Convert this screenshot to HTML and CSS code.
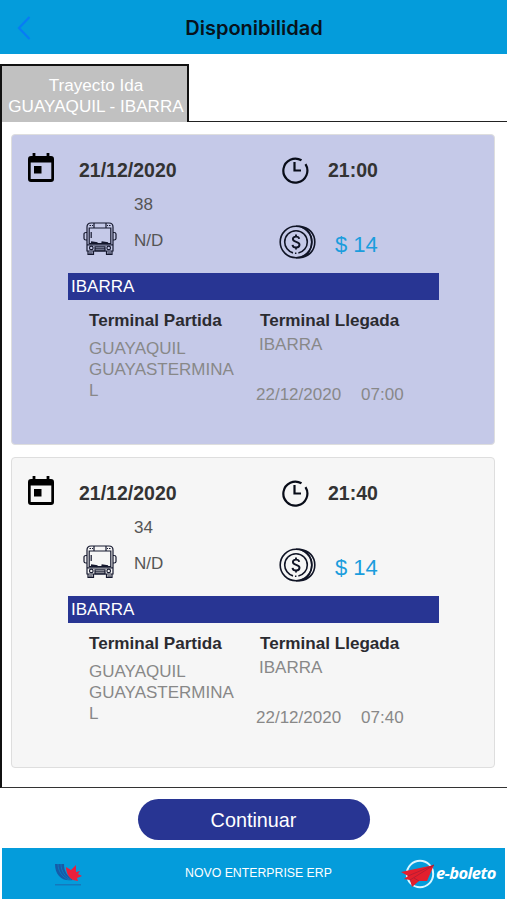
FILE: index.html
```html
<!DOCTYPE html>
<html lang="es">
<head>
    <meta charset="UTF-8">
    <meta name="viewport" content="width=device-width, initial-scale=1.0">
    <title>Disponibilidad</title>
    <link rel="stylesheet" href="styles.css">
</head>
<body>

    <!-- Shared icons -->
    <svg class="sprite" width="0" height="0">
        <symbol id="calendar" viewBox="0 0 26 29">
            <path fill-rule="evenodd" d="M4.600 0h2.800v3h11.200V0h2.800v3H23a3 3 0 0 1 3 3v20a3 3 0 0 1-3 3H3a3 3 0 0 1-3-3V6a3 3 0 0 1 3-3h1.600zM2.700 9.500v16.500h20.600V9.500z"/>
            <path d="M6 13h7.500v7.500H6z"/>
        </symbol>
        <symbol id="clock" viewBox="0 0 28 28">
            <path d="M20.500 4.300A12 12 0 1 0 24.500 8.200M13.500 6v8.500h6.500" fill="none" stroke="#080c18" stroke-width="2.200"/>
        </symbol>
        <symbol id="bus" viewBox="0 0 34 34">
            <g fill="none" stroke="#15182e" stroke-width="1.200">
                <path d="M4 29V5q0-4 4-4h18q4 0 4 4v24zM11 1v5M23 1v5M6.200 6h21.600v15.500H6.200zM4 22.800h26"/>
                <path d="M4 10.500H3q-2 0-2 1.500v4.500q0 1.500 2 1.500h1M30 10.500h1q2 0 2 1.500v4.500q0 1.500-2 1.500h-1M8.200 10v6"/>
                <path d="M5 29v3.300h5.500V29M23.500 29v3.300H29V29M12 24.800h10v4H12zM12 26.800h10"/>
                <circle cx="8.300" cy="25.900" r="1.800"/>
                <circle cx="25.700" cy="25.900" r="1.800"/>
                <path d="M8 20.200l6.500 1M18.500 20.200l6.500 1" stroke-width="2"/>
                <path d="M6.500 3.500h1.500M9 3.500h1M24 3.500h1M26 3.500h1.500M6 31h3.500M24.500 31H28"/>
            </g>
        </symbol>
        <symbol id="coin" viewBox="0 0 37 34">
            <g fill="none" stroke="#101425" stroke-width="1.600">
                <circle cx="17" cy="17" r="15.800"/>
                <circle cx="17" cy="17" r="11.300" stroke-dasharray="15.200 2 1.500 2 100"/>
                <path d="M17 1.200h4c9 1 14.800 7.500 14.800 15.800S30 31.800 21 32.800h-4M22 1.800c7 2 10.800 8 10.800 15.200S29 30.200 22 32.200"/>
                <path d="M20.200 13.800c-.5-3-6.300-3-6.300.3 0 3.500 6.600 2 6.600 5.600 0 3.700-6.500 3.700-7 .1M17 9.500v2.500M17 22v2.500" stroke-width="1.900"/>
            </g>
        </symbol>
    </svg>

    <header>
        <svg class="back" viewBox="0 0 14 24"><path d="M12.500 1L2 12l10.500 11"/></svg>
        <h1>Disponibilidad</h1>
    </header>

    <main>
        <div class="tabs">
            <div class="tab">Trayecto Ida<br>GUAYAQUIL - IBARRA</div>
            <div class="tab-line"></div>
        </div>

        <!-- Trips -->
        <div class="trips">
            <section class="card selected">
                <div class="departure">
                    <svg class="calendar"><use href="#calendar"/></svg>
                    <strong class="date">21/12/2020</strong>
                    <svg class="clock"><use href="#clock"/></svg>
                    <strong>21:00</strong>
                </div>
                <div class="details">
                    <svg class="bus"><use href="#bus"/></svg>
                    <div class="seats">38<br>N/D</div>
                    <svg class="coin"><use href="#coin"/></svg>
                    <span class="price">$ 14</span>
                </div>
                <div class="route">IBARRA</div>
                <div class="terminals">
                    <div class="from">
                        <h2>Terminal Partida</h2>
                        <p>GUAYAQUIL GUAYASTERMINAL</p>
                    </div>
                    <div class="to">
                        <h2>Terminal Llegada</h2>
                        <p>IBARRA</p>
                        <div class="arrival"><span>22/12/2020</span><span>07:00</span></div>
                    </div>
                </div>
            </section>

            <section class="card">
                <div class="departure">
                    <svg class="calendar"><use href="#calendar"/></svg>
                    <strong class="date">21/12/2020</strong>
                    <svg class="clock"><use href="#clock"/></svg>
                    <strong>21:40</strong>
                </div>
                <div class="details">
                    <svg class="bus"><use href="#bus"/></svg>
                    <div class="seats">34<br>N/D</div>
                    <svg class="coin"><use href="#coin"/></svg>
                    <span class="price">$ 14</span>
                </div>
                <div class="route">IBARRA</div>
                <div class="terminals">
                    <div class="from">
                        <h2>Terminal Partida</h2>
                        <p>GUAYAQUIL GUAYASTERMINAL</p>
                    </div>
                    <div class="to">
                        <h2>Terminal Llegada</h2>
                        <p>IBARRA</p>
                        <div class="arrival"><span>22/12/2020</span><span>07:40</span></div>
                    </div>
                </div>
            </section>
        </div>
    </main>

    <button>Continuar</button>

    <footer>
        <svg class="company" viewBox="0 0 28 23">
            <path fill="#165ba8" d="M1 0h9c0 7 3 12 9 16C8 18 1 11 1 0z"/>
            <path fill="none" stroke="#0787cc" stroke-width=".7" d="M4 0c0 7 4 13 11 16M7 0c0 7 4 13 10 16"/>
            <path fill="#e9203c" d="M12 3l5 3 5-5v7l4-1-2 3 4 2-5 2 1 3-5-1c-4-2-7-7-7-13z"/>
            <path fill="#1479bd" d="M1 20h26v1.500H1z"/>
        </svg>
        <span class="erp">NOVO ENTERPRISE ERP</span>
        <div class="brand">
            <svg viewBox="0 0 34 30">
                <circle cx="19" cy="15" r="13.200" fill="none" stroke="#d9f6ff" stroke-width="2"/>
                <path fill="#e31f2d" d="M0 13L33 6 26 22l-8 0-7 6-2-7-6-1 4-3z"/>
                <path fill="none" stroke="#a31c35" stroke-width=".7" d="M33 6L9 21M33 6L7 17M18 22l-5-3"/>
            </svg>
            <span>e-boleto</span>
        </div>
    </footer>

</body>
</html>
```

FILE: styles.css
```css
* {
    box-sizing: border-box;
}

body {
    margin: 0;
    height: 900px;
    overflow: hidden;
    background-color: white;
    color: #333;
    font-family: "Liberation Sans", Arial, sans-serif;
    font-size: 17px;
}

svg {
    display: block;
    flex: none;
}

.sprite {
    display: none;
}

header {
    display: grid;
    grid-template-columns: 60px 1fr 60px;
    align-items: center;
    height: 54px;
    background-color: #049cdb;
}

.back {
    width: 14px;
    height: 24px;
    margin: 2px 0 0 17px;
    fill: none;
    stroke: #087cf5;
    stroke-width: 2.2;
}

h1 {
    margin: 0;
    padding: 2px 0 0 1px;
    color: #07131c;
    font-family: Inter, sans-serif;
    font-size: 20px;
    font-weight: 600;
    text-align: center;
}

main {
    height: 724px;
    margin-top: 10px;
    border-left: 2px solid #111;
    border-bottom: 1.5px solid #333;
}

.tabs {
    display: flex;
    height: 58px;
}

.tab {
    width: 187px;
    padding: 9px 0 0 3px;
    border-top: 2px solid #111;
    border-right: 2px solid #111;
    background-color: #c1c1c1;
    color: white;
    font-size: 17.1px;
    line-height: 21px;
    text-align: center;
    white-space: nowrap;
}

.tab-line {
    flex: 1;
    border-bottom: 1px solid #222;
}

.trips {
    display: grid;
    gap: 12px;
    padding: 12px 12px 0 9px;
}

.card {
    height: 311px;
    padding-top: 16px;
    border: 1px solid #dedede;
    border-radius: 4px;
    background-color: #f6f6f6;
}

.selected {
    background-color: #c5c9e8;
}

.departure {
    display: flex;
    align-items: center;
    height: 39px;
    font-size: 19.5px;
}

.calendar {
    width: 26px;
    height: 29px;
    margin: 0 25px 6px 16px;
}

.date {
    width: 202px;
}

.clock {
    width: 28px;
    height: 28px;
    margin: 0 19px 2px 0;
}

.details {
    display: flex;
    height: 83px;
}

.bus {
    width: 34px;
    height: 34px;
    margin: 32px 17px 0 71px;
}

.seats {
    width: 145px;
    margin-top: -3px;
    color: #555;
    line-height: 35.5px;
}

.coin {
    width: 37px;
    height: 34px;
    margin: 35px 19px 0 0;
}

.price {
    margin-top: 42px;
    color: #1b9ddd;
    font-size: 22px;
    line-height: 26px;
}

.route {
    width: 371px;
    height: 27px;
    margin-left: 56px;
    padding-left: 3px;
    background-color: #283593;
    color: white;
    line-height: 27px;
}

.terminals {
    display: flex;
    padding: 11px 0 0 77px;
    color: #888;
}

h2 {
    margin: 0;
    color: #2b2b30;
    font-size: 17.1px;
    line-height: 20px;
}

p {
    margin: 0;
}

.from {
    width: 171px;
}

.from p {
    width: 148px;
    margin-top: 7px;
    line-height: 21px;
    overflow-wrap: break-word;
}

.to p {
    margin: 4px 0 0 -1px;
    line-height: 20px;
}

.arrival {
    display: flex;
    gap: 20px;
    margin: 30px 0 0 -4px;
    line-height: 20px;
}

button {
    display: block;
    width: 232px;
    height: 41px;
    margin: 11px auto 8px;
    padding-top: 3px;
    border: none;
    border-radius: 21px;
    background-color: #283593;
    color: white;
    font-family: inherit;
    font-size: 19.8px;
}

footer {
    display: flex;
    align-items: center;
    height: 51px;
    margin: 0 2px;
    background-color: #049cdb;
    color: white;
}

.company {
    width: 28px;
    height: 23px;
    margin: 3px 103px 0 52px;
}

.erp {
    width: 216px;
    padding-bottom: 1px;
    font-size: 12.3px;
}

.brand {
    display: flex;
    align-items: center;
    font-family: "Open Sans", sans-serif;
    font-size: 16.5px;
    font-style: italic;
    font-weight: 700;
    letter-spacing: -0.6px;
}

.brand span {
    padding: 0 0 2px 1px;
}

.brand svg {
    width: 34px;
    height: 30px;
}
```
